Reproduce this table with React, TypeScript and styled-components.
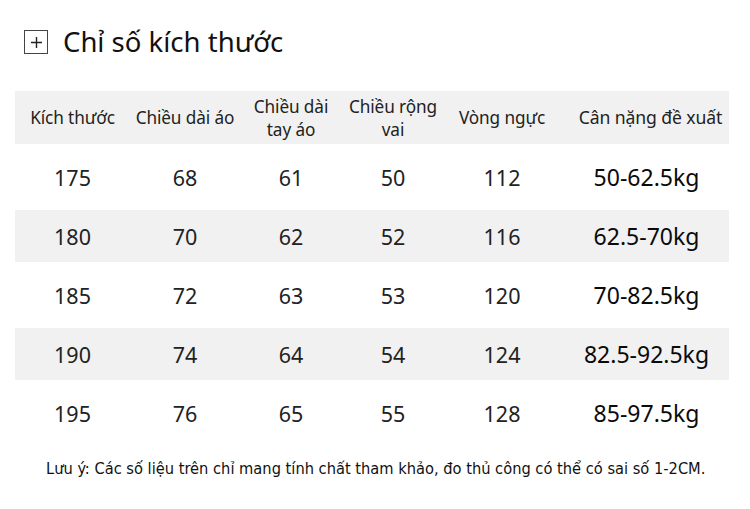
import React from "react";
import styled, { createGlobalStyle } from "styled-components";

const GlobalStyle = createGlobalStyle`
    html, body {
        margin: 0;
        padding: 0;
        background: #ffffff;
    }
    body {
        font-family: "Noto Sans", "Open Sans", sans-serif;
        color: #1a1a1a;
    }
`;

const headers = [
    ["Kích thước"],
    ["Chiều dài áo"],
    ["Chiều dài", "tay áo"],
    ["Chiều rộng", "vai"],
    ["Vòng ngực"],
    ["Cân nặng đề xuất"],
];

const rows = [
    ["175", "68", "61", "50", "112", "50-62.5kg"],
    ["180", "70", "62", "52", "116", "62.5-70kg"],
    ["185", "72", "63", "53", "120", "70-82.5kg"],
    ["190", "74", "64", "54", "124", "82.5-92.5kg"],
    ["195", "76", "65", "55", "128", "85-97.5kg"],
];

const App: React.FC = () => {
    return (
        <>
            <GlobalStyle />
            <Page>
                <TitleBar>
                    <PlusBox>
                        <svg width="13" height="13" viewBox="0 0 13 13">
                            <path d="M6.5 1v11M1 6.5h11" stroke="#222" strokeWidth="1.4" />
                        </svg>
                    </PlusBox>
                    <Title>Chỉ số kích thước</Title>
                </TitleBar>

                <Table>
                    <HeaderRow>
                        {headers.map((h, i) => (
                            <HeadCell key={i} $wide={i === 5}>
                                {h.map((line, j) => (
                                    <span key={j}>{line}</span>
                                ))}
                            </HeadCell>
                        ))}
                    </HeaderRow>
                    {rows.map((r, i) => (
                        <DataRow key={r[0]} $shaded={i % 2 === 1}>
                            {r.map((v, j) => (
                                <Cell key={j} $weight={j === 5}>
                                    {v}
                                </Cell>
                            ))}
                        </DataRow>
                    ))}
                </Table>

                <Note>
                    Lưu ý: Các số liệu trên chỉ mang tính chất tham khảo, đo thủ công có thể có sai số 1-2CM.
                </Note>
            </Page>
        </>
    );
};

export default App;

const Page = styled.div`
    width: 750px;
    height: 509px;
    padding: 29px 21px 0 15px;
    box-sizing: border-box;
    display: flex;
    flex-direction: column;
`;

const TitleBar = styled.div`
    display: flex;
    align-items: center;
    gap: 15px;
    padding-left: 9px;
    height: 26px;
`;

const PlusBox = styled.div`
    width: 22px;
    height: 22px;
    border: 1px solid #444;
    display: flex;
    align-items: center;
    justify-content: center;
`;

const Title = styled.div`
    font-size: 27.5px;
    color: #111;
    line-height: 26px;
`;

const Table = styled.div`
    margin-top: 36px;
    width: 714px;
    display: flex;
    flex-direction: column;
`;

const columns = "115px 110px 102px 102px 116px 169px";

const HeaderRow = styled.div`
    display: grid;
    grid-template-columns: ${columns};
    height: 53px;
    background: #f1f1f1;
    align-items: center;
`;

const HeadCell = styled.div<{ $wide?: boolean }>`
    display: flex;
    flex-direction: column;
    align-items: center;
    padding-left: ${(p) => (p.$wide ? "12px" : "0")};
    font-size: ${(p) => (p.$wide ? "17.6px" : "17.2px")};
    line-height: 23px;
    color: #222;
    letter-spacing: -0.1px;
    white-space: nowrap;
`;

const DataRow = styled.div<{ $shaded: boolean }>`
    display: grid;
    grid-template-columns: ${columns};
    height: ${(p) => (p.$shaded ? "52px" : "66px")};
    background: ${(p) => (p.$shaded ? "#f1f1f1" : "#ffffff")};
    align-items: center;
`;

const Cell = styled.div<{ $weight: boolean }>`
    text-align: center;
    font-size: ${(p) => (p.$weight ? "23px" : "21.5px")};
    color: ${(p) => (p.$weight ? "#0a0a0a" : "#222")};
    padding-left: ${(p) => (p.$weight ? "4px" : "0")};
`;

const Note = styled.div`
    margin-top: 13px;
    padding-left: 31px;
    font-family: "DejaVu Sans Condensed", "DejaVu Sans", sans-serif;
    font-size: 16.3px;
    color: #111;
    white-space: nowrap;
`;
